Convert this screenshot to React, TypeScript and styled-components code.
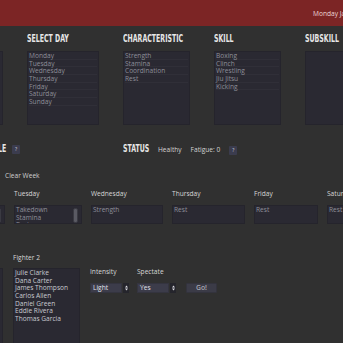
import React from "react";
import styled, { createGlobalStyle } from "styled-components";

const GlobalStyle = createGlobalStyle`
  html, body {
    margin: 0;
    padding: 0;
    background: #303030;
    overflow: hidden;
  }

  body {
    font-family: "Open Sans", "DejaVu Sans", sans-serif;
  }
`;

const Header = styled.header`
  height: 26px;
  background: #7c2525;
  display: flex;
  align-items: center;
  padding-left: 313px;
  font-size: 6.6px;
  color: #ecd6d6;
  white-space: nowrap;
`;

// the page is wider than the window and scrolled a bit to the right
const Page = styled.main`
  margin-left: -65px;
  width: 560px;
`;

const TopRow = styled.section`
  display: flex;
  gap: 24px;
  padding-top: 7px;
`;

const Column = styled.div<{ $w: number }>`
  width: ${(p) => p.$w}px;
  flex: none;
`;

const Heading = styled.h2<{ $w?: number; $end?: boolean }>`
  margin: 0;
  height: 12px;
  line-height: 12px;
  display: flex;
  justify-content: ${(p) => (p.$end ? "flex-end" : "flex-start")};
  font-family: "Liberation Sans Narrow", "DejaVu Sans Condensed", "Liberation Sans", sans-serif;
  font-weight: 700;
  font-size: 11px;
  color: #e6e6e6;
  white-space: nowrap;
  flex: none;
  width: ${(p) => (p.$w ? `${p.$w}px` : "auto")};

  span {
    flex: none;
    display: inline-block;
    transform: scaleX(0.63);
    transform-origin: ${(p) => (p.$end ? "right" : "left")} center;
  }
`;

const ListBox = styled.div<{ $h: number; $top: number }>`
  display: flex;
  height: ${(p) => p.$h}px;
  margin-top: ${(p) => p.$top}px;
  box-sizing: border-box;
  background: #2a2932;
  border: 1px solid #25242c;
  padding: 0 1px;
  overflow: hidden;
`;

const Options = styled.div`
  flex: 1;
  min-width: 0;
`;

const Option = styled.div<{ $bright?: boolean; $lined?: boolean }>`
  height: 7.67px;
  line-height: 7.67px;
  font-size: 6.6px;
  white-space: nowrap;
  color: ${(p) => (p.$bright ? "#c9c9d1" : "#8f8f99")};
  box-shadow: ${(p) => (p.$lined ? "inset 0 -1px 0 rgba(255, 255, 255, 0.03)" : "none")};
`;

const Thumb = styled.div`
  flex: none;
  width: 3px;
  height: 13px;
  margin: 2px 2px 0 2px;
  border-radius: 2px;
  background: #5a5a63;
  border: 1px solid #3a3a42;
`;

const TitleRow = styled.section`
  display: flex;
  align-items: center;
  margin-top: 18px;
  height: 12px;
`;

const TitleGroup = styled.div<{ $w?: number; $gap: number }>`
  display: flex;
  align-items: center;
  gap: ${(p) => p.$gap}px;
  width: ${(p) => (p.$w ? `${p.$w}px` : "auto")};
  flex: none;
`;

const Badge = styled.span<{ $down?: number }>`
  display: inline-flex;
  align-items: center;
  justify-content: center;
  width: 8px;
  height: 9px;
  margin-top: ${(p) => p.$down ?? 0}px;
  background: #3b3c4e;
  color: #cfd0dc;
  font-size: 5px;
  border-radius: 1px;
`;

const Meta = styled.span`
  font-size: 6.6px;
  color: #d2d2d2;
  white-space: nowrap;
`;

const ClearWeek = styled.div`
  margin: 15.5px 0 0 70px;
  font-size: 6.6px;
  line-height: 9px;
  color: #cfcfcf;
`;

const DaysRow = styled.section`
  display: flex;
  gap: 9px;
  margin-top: 9px;
`;

const Label = styled.div`
  font-size: 6.6px;
  line-height: 9px;
  color: #d6d6d6;
  white-space: nowrap;
`;

const FighterRow = styled.section`
  display: flex;
  align-items: flex-start;
  gap: 10px;
  margin-top: 28.5px;
`;

const Controls = styled.div`
  display: flex;
  align-items: flex-end;
  gap: 8px;
  margin-top: 14px;
`;

const Field = styled.div`
  display: flex;
  flex-direction: column;
  gap: 7.5px;
`;

const Select = styled.div`
  display: flex;
  height: 10px;
  gap: 1px;
`;

const SelectValue = styled.div`
  width: 32px;
  box-sizing: border-box;
  padding-left: 2px;
  background: #3c3c4a;
  border: 1px solid #34343f;
  color: #e2e2ea;
  font-size: 6.6px;
  line-height: 8px;
`;

const SelectArrow = styled.div`
  width: 6px;
  display: flex;
  align-items: center;
  justify-content: center;
  background: #25252c;
`;

const GoButton = styled.button`
  width: 31px;
  height: 10px;
  margin-left: 2px;
  padding: 0;
  box-sizing: border-box;
  background: #3b3b47;
  border: 1px solid #33333d;
  border-radius: 1px;
  color: #a9a9b2;
  font-family: "Open Sans", "DejaVu Sans", sans-serif;
  font-size: 6.8px;
  font-weight: 600;
  line-height: 8px;
`;

const Arrows: React.FC = () => (
  <svg width="3" height="6" viewBox="0 0 3 6">
    <path d="M1.5 0.5 L3 2.5 L0 2.5 Z M1.5 5.5 L3 3.5 L0 3.5 Z" fill="#e0e0e6" />
  </svg>
);

const lists = [
  { title: "Schedule", w: 68, items: [] as string[] },
  {
    title: "Select Day",
    w: 72,
    items: ["Monday", "Tuesday", "Wednesday", "Thursday", "Friday", "Saturday", "Sunday"],
  },
  { title: "Characteristic", w: 67, items: ["Strength", "Stamina", "Coordination", "Rest"] },
  { title: "Skill", w: 67, items: ["Boxing", "Clinch", "Wrestling", "Jiu Jitsu", "Kicking"] },
  { title: "Subskill", w: 67, items: [] as string[] },
];

const days = [
  { name: "Monday", w: 70, items: ["Boxing", "Clinch", "Rest"], thumb: true },
  { name: "Tuesday", w: 68, items: ["Takedown", "Stamina", "Rest"], thumb: true },
  { name: "Wednesday", w: 72, items: ["Strength"], thumb: false },
  { name: "Thursday", w: 73, items: ["Rest"], thumb: false },
  { name: "Friday", w: 64, items: ["Rest"], thumb: false },
  { name: "Saturday", w: 70, items: ["Rest"], thumb: false },
];

const fighters = [
  "Julie Clarke",
  "Dana Carter",
  "James Thompson",
  "Carlos Allen",
  "Daniel Green",
  "Eddie Rivera",
  "Thomas Garcia",
];

const App: React.FC = () => {
  return (
    <>
      <GlobalStyle />
      <Header>Monday January 7, 2019</Header>
      <Page>
        <TopRow>
          {lists.map((l) => (
            <Column key={l.title} $w={l.w}>
              <Heading>
                <span>{l.title.toUpperCase()}</span>
              </Heading>
              <ListBox $h={74} $top={6}>
                <Options>
                  {l.items.map((it) => (
                    <Option key={it} $lined>
                      {it}
                    </Option>
                  ))}
                </Options>
              </ListBox>
            </Column>
          ))}
        </TopRow>

        <TitleRow>
          <TitleGroup $w={188} $gap={6}>
            <Heading $w={71} $end>
              <span>TRAINING SCHEDULE</span>
            </Heading>
            <Badge>?</Badge>
          </TitleGroup>
          <TitleGroup $gap={9}>
            <Heading $w={26}>
              <span>STATUS</span>
            </Heading>
            <Meta>Healthy</Meta>
            <Meta>Fatigue: 0</Meta>
            <Badge $down={2}>?</Badge>
          </TitleGroup>
        </TitleRow>

        <ClearWeek>Clear Week</ClearWeek>

        <DaysRow>
          {days.map((d) => (
            <Column key={d.name} $w={d.w}>
              <Label>{d.name}</Label>
              <ListBox $h={19} $top={7.5}>
                <Options>
                  {d.items.map((it) => (
                    <Option key={it}>{it}</Option>
                  ))}
                </Options>
                {d.thumb && <Thumb />}
              </ListBox>
            </Column>
          ))}
        </DaysRow>

        <FighterRow>
          <Column $w={68}>
            <Label>Fighter 1</Label>
            <ListBox $h={80} $top={6.5}>
              <Options>
                {fighters.map((f) => (
                  <Option key={f} $bright>
                    {f}
                  </Option>
                ))}
              </Options>
            </ListBox>
          </Column>
          <Column $w={67}>
            <Label>Fighter 2</Label>
            <ListBox $h={80} $top={6.5}>
              <Options>
                {fighters.map((f) => (
                  <Option key={f} $bright>
                    {f}
                  </Option>
                ))}
              </Options>
            </ListBox>
          </Column>
          <Controls>
            <Field>
              <Label>Intensity</Label>
              <Select>
                <SelectValue>Light</SelectValue>
                <SelectArrow>
                  <Arrows />
                </SelectArrow>
              </Select>
            </Field>
            <Field>
              <Label>Spectate</Label>
              <Select>
                <SelectValue>Yes</SelectValue>
                <SelectArrow>
                  <Arrows />
                </SelectArrow>
              </Select>
            </Field>
            <GoButton>Go!</GoButton>
          </Controls>
        </FighterRow>
      </Page>
    </>
  );
};

export default App;
